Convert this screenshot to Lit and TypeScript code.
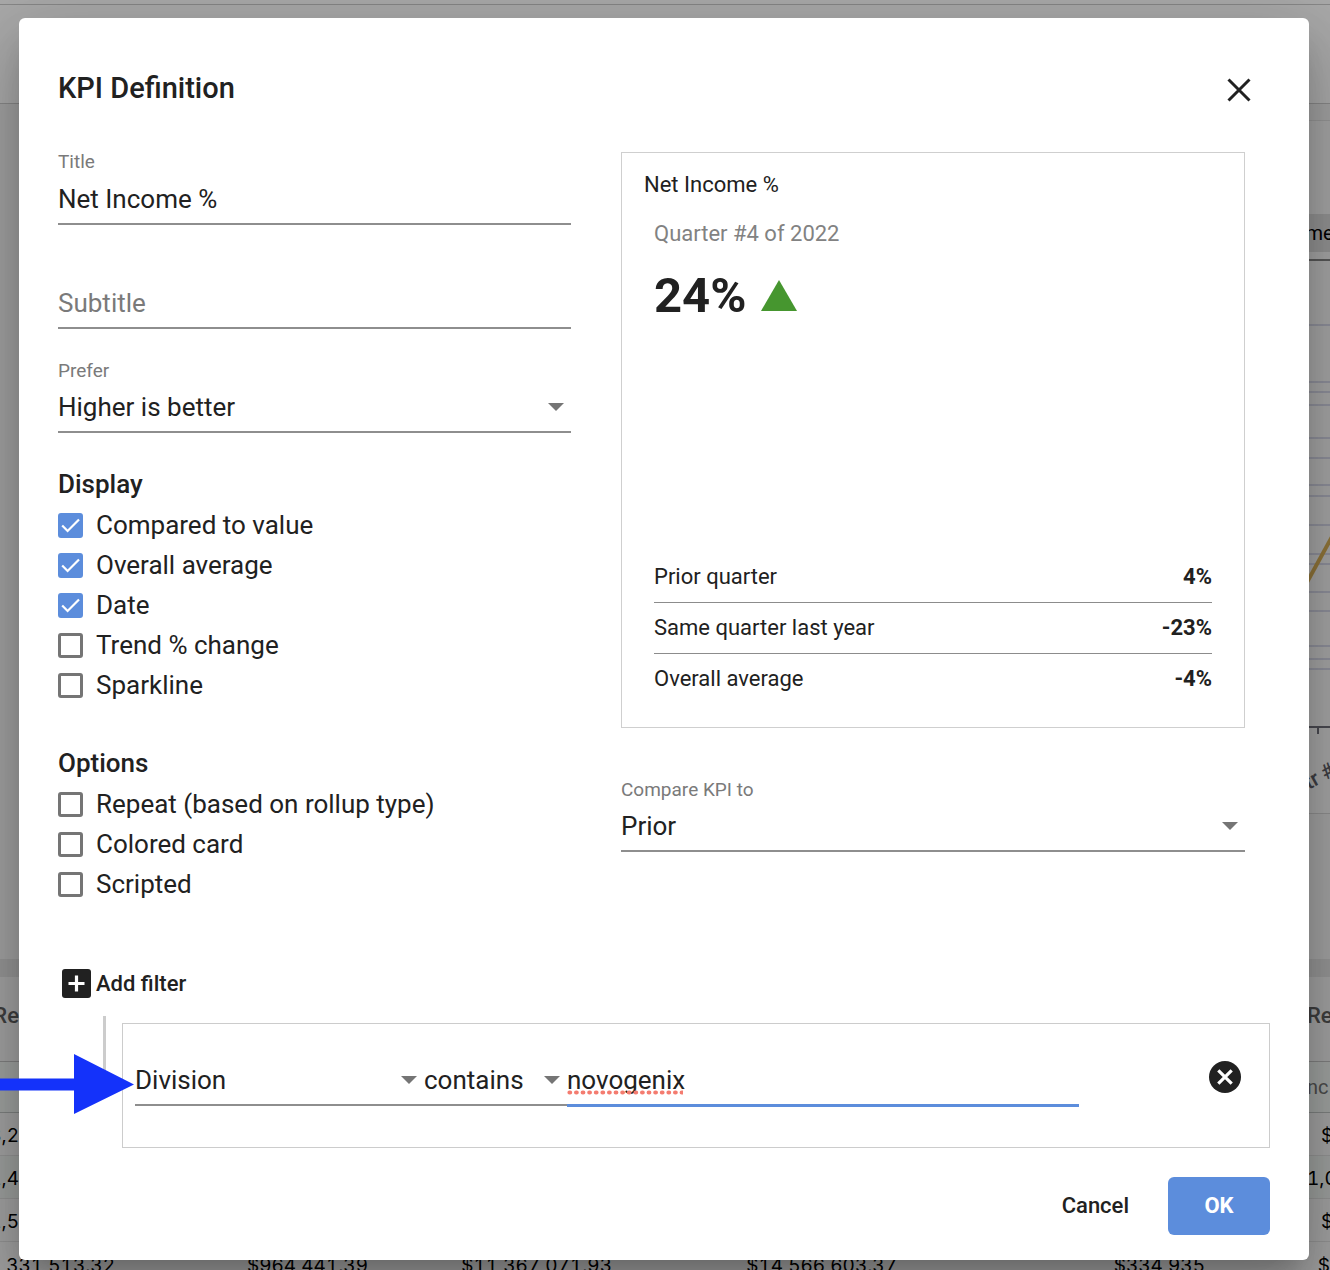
import { LitElement, html, css, svg, nothing } from "lit";
import { customElement, property, state } from "lit/decorators.js";

const chevron = html`<svg class="caret" viewBox="0 0 16 8" width="16" height="8" aria-hidden="true">
  <path d="M0 0H16L8 8Z" fill="#757575" />
</svg>`;

/* The dashboard that sits dimmed behind the dialog. */
@customElement("dashboard-page")
class DashboardPage extends LitElement {
  static styles = css`
    :host {
      display: block;
      min-height: 100vh;
      background: #eeeeee;
      font-family: Roboto, sans-serif;
      font-size: 20px;
      color: #000;
    }
    .strip {
      height: 4px;
      background: #fafafa;
      border-bottom: 1px solid #c8c8c8;
    }
    .bar {
      height: 98px;
      background: #fafafa;
      border-bottom: 1px solid #c8c8c8;
    }
    .canvas {
      display: flex;
      justify-content: flex-end;
      height: 855px;
    }
    .panel {
      width: 21px;
      padding-top: 16px;
      overflow: hidden;
    }
    .card {
      height: 692px;
      background: #f2f2f2;
      border-top: 1px solid #dcdcdc;
      border-bottom: 1px solid #d0d0d0;
    }
    .tab {
      display: flex;
      align-items: center;
      justify-content: center;
      height: 38px;
      margin-top: 93px;
      background: #d6d6d6;
      white-space: nowrap;
    }
    .chart {
      display: block;
      margin-top: 7px;
    }
    .divider {
      height: 18px;
      background: #dcdcdc;
    }
    .group,
    .sub,
    .row {
      display: flex;
      justify-content: space-between;
      box-sizing: border-box;
      overflow: hidden;
      background: #eeeeee;
    }
    .group {
      height: 85px;
      padding-bottom: 8px;
      border-bottom: 1px solid #bbb;
      font-weight: 500;
      font-size: 22px;
      color: #5c5c5c;
    }
    .sub {
      height: 51px;
      background: #e9eeeb;
      border-bottom: 1px solid #b8bdbb;
      color: #707070;
    }
    .row,
    .totals {
      font-family: Inter, sans-serif;
      font-size: 19px;
      font-variant-numeric: tabular-nums;
    }
    .row {
      height: 43px;
      padding-top: 2px;
      border-bottom: 1px solid #d8d8d8;
    }
    .row:nth-child(even) {
      background: #e6ebe8;
    }
    .edge {
      display: flex;
      align-items: center;
      width: 19px;
      overflow: hidden;
      white-space: nowrap;
    }
    .start {
      justify-content: flex-end;
    }
    .end {
      width: 23px;
    }
    .indent {
      box-sizing: border-box;
      padding-left: 14px;
    }
    .totals {
      display: grid;
      grid-template-columns: 115fr 253fr 244fr 285fr 308fr 125fr;
      align-items: center;
      height: 46px;
      overflow: hidden;
      background: #eeeeee;
      text-align: right;
    }
  `;

  render() {
    const gridLines = [325, 382, 392, 405, 438, 458, 485, 496, 525, 554, 564, 592, 611, 646, 659, 669];
    return html`
      <div class="strip"></div>
      <div class="bar"></div>
      <div class="canvas">
        <div class="panel">
          <div class="card">
            <div class="tab">me</div>
            <svg class="chart" viewBox="0 259 21 554" width="21" height="554">
              <path d="M0 260H21" stroke="#808080" stroke-width="2" />
              ${gridLines.map((y) => svg`<path d="M0 ${y}H21" stroke="#d0d2e2" stroke-width="2" />`)}
              <path d="M-3 584L24 535" stroke="#d3ac55" stroke-width="4" />
              <path d="M0 727H21M9 727V734" stroke="#6e6e78" stroke-width="2" fill="none" />
              <text transform="translate(-13 797) rotate(-29)" font-size="21" font-weight="500" fill="#5c5c64">Qtr #</text>
            </svg>
          </div>
        </div>
      </div>
      <div class="divider"></div>
      <div class="group"><span class="edge start">Re</span><span class="edge end">Re</span></div>
      <div class="sub"><span></span><span class="edge end">nc</span></div>
      <div>
        <div class="row"><span class="edge start">8,2</span><span class="edge end indent">$</span></div>
        <div class="row"><span class="edge start">1,4</span><span class="edge end">1,0</span></div>
        <div class="row"><span class="edge start">1,5</span><span class="edge end indent">$</span></div>
      </div>
      <div class="totals">
        <span>,331,513.32</span><span>$964,441.39</span><span>$11,367,071.93</span><span>$14,566,603.37</span
        ><span>$334,935</span><span>$</span>
      </div>
    `;
  }
}

/* Underlined text box with a small caption above it. */
@customElement("text-field")
class TextField extends LitElement {
  @property() label = "";
  @property() value = "";

  static styles = css`
    :host {
      display: block;
    }
    .caption {
      display: block;
      height: 24px;
      line-height: 26px;
      font-size: 19px;
      color: #7a7a7a;
    }
    .box {
      display: block;
      box-sizing: border-box;
      width: 100%;
      height: 52px;
      padding: 1px 0 0;
      border: 0;
      border-bottom: 2px solid #8e8e8e;
      outline: 0;
      background: none;
      font: inherit;
      font-size: 26px;
      color: #212121;
    }
    .box::placeholder {
      color: #7a7a7a;
      opacity: 1;
    }
  `;

  render() {
    return html`
      <label class="caption" for="box">${this.value ? this.label : nothing}</label>
      <input class="box" id="box" .value=${this.value} placeholder=${this.label} aria-label=${this.label} />
    `;
  }
}

@customElement("select-field")
class SelectField extends LitElement {
  @property() label = "";
  @property() name = "";
  @property({ attribute: false }) options: string[] = [];

  static styles = css`
    :host {
      display: block;
    }
    .caption {
      display: block;
      height: 24px;
      line-height: 28px;
      font-size: 19px;
      color: #7a7a7a;
    }
    .wrap {
      display: grid;
      align-items: center;
    }
    .wrap > * {
      grid-area: 1 / 1;
    }
    .box {
      box-sizing: border-box;
      width: 100%;
      height: 52px;
      padding: 2px 0 0;
      border: 0;
      border-bottom: 2px solid #8e8e8e;
      border-radius: 0;
      outline: 0;
      appearance: none;
      background: none;
      font: inherit;
      font-size: 26px;
      color: #212121;
    }
    .caret {
      justify-self: end;
      margin-right: 7px;
      pointer-events: none;
    }
  `;

  render() {
    return html`
      ${this.label ? html`<label class="caption" for="box">${this.label}</label>` : nothing}
      <div class="wrap">
        <select class="box" id="box" aria-label=${this.label || this.name}>
          ${this.options.map((o) => html`<option>${o}</option>`)}
        </select>
        ${chevron}
      </div>
    `;
  }
}

@customElement("check-list")
class CheckList extends LitElement {
  @property() heading = "";
  @property({ attribute: false }) items: { label: string; checked: boolean }[] = [];

  static styles = css`
    :host {
      display: block;
    }
    .heading {
      margin: 0 0 1px;
      font-size: 26px;
      line-height: 40px;
      font-weight: 500;
    }
    .item {
      display: flex;
      align-items: center;
      gap: 13px;
      height: 40px;
      font-size: 26px;
    }
    .mark {
      display: grid;
      flex: none;
      width: 25px;
      height: 25px;
    }
    .mark > * {
      grid-area: 1 / 1;
    }
    .tick {
      box-sizing: border-box;
      width: 25px;
      height: 25px;
      margin: 0;
      appearance: none;
      border: 3px solid #757575;
      border-radius: 3px;
    }
    .tick:checked {
      border-color: #5c8ddc;
      background: #5c8ddc;
    }
    .glyph {
      pointer-events: none;
      visibility: hidden;
    }
    .tick:checked + .glyph {
      visibility: visible;
    }
  `;

  render() {
    return html`
      <h3 class="heading">${this.heading}</h3>
      ${this.items.map(
        (item) => html`<label class="item">
          <span class="mark">
            <input class="tick" type="checkbox" .checked=${item.checked} />
            <svg class="glyph" viewBox="0 0 25 25" width="25" height="25" aria-hidden="true">
              <path d="M4.2 12.4L9.6 18L21 6.5" fill="none" stroke="#fff" stroke-width="2.2" />
            </svg>
          </span>
          ${item.label}
        </label>`
      )}
    `;
  }
}

@customElement("app-root")
class AppRoot extends LitElement {
  @state() private display = [
    { label: "Compared to value", checked: true },
    { label: "Overall average", checked: true },
    { label: "Date", checked: true },
    { label: "Trend % change", checked: false },
    { label: "Sparkline", checked: false },
  ];
  @state() private choices = [
    { label: "Repeat (based on rollup type)", checked: false },
    { label: "Colored card", checked: false },
    { label: "Scripted", checked: false },
  ];
  private stats = [
    ["Prior quarter", "4%"],
    ["Same quarter last year", "-23%"],
    ["Overall average", "-4%"],
  ];

  static styles = css`
    :host {
      display: grid;
      min-height: 100vh;
      overflow: hidden;
      position: relative;
      font-family: Roboto, sans-serif;
      color: #212121;
    }
    .page,
    .scrim {
      grid-area: 1 / 1;
      min-width: 0;
    }
    .page {
      height: 100vh;
      overflow: hidden;
    }
    .scrim {
      z-index: 1;
      padding: 18px 21px 10px 19px;
      background: rgba(0, 0, 0, 0.32);
    }
    .dialog {
      box-sizing: border-box;
      height: 100%;
      padding: 50px 39px 25px;
      border-radius: 6px;
      background: #fff;
      box-shadow:
        0 18px 24px -11px rgba(0, 0, 0, 0.2),
        0 38px 61px 5px rgba(0, 0, 0, 0.14),
        0 14px 74px 13px rgba(0, 0, 0, 0.12);
    }
    button {
      padding: 0;
      border: 0;
      background: none;
      font: inherit;
      color: inherit;
      cursor: pointer;
    }
    svg {
      display: block;
    }
    .head {
      display: flex;
      align-items: center;
      justify-content: space-between;
      height: 40px;
      padding-right: 19px;
    }
    .title {
      margin: 0;
      font-size: 29px;
      font-weight: 500;
    }
    .close {
      padding-top: 3px;
    }
    .columns {
      display: grid;
      grid-template-columns: 513fr 624fr;
      gap: 50px;
      margin-top: 41px;
      padding-right: 25px;
    }
    .fields {
      display: grid;
      gap: 28px;
    }
    .checks {
      display: grid;
      gap: 38px;
      margin-top: 31px;
    }
    .preview {
      box-sizing: border-box;
      display: flex;
      flex-direction: column;
      height: 576px;
      margin-top: 3px;
      margin-bottom: 48px;
      padding: 17px 32px 23px;
      border: 1px solid #cfcfcf;
      font-size: 22px;
    }
    .name {
      margin: 0 -10px;
      font-size: 22px;
      line-height: 30px;
      font-weight: 400;
    }
    .period {
      margin: 19px 0 0;
      line-height: 30px;
      color: #828282;
    }
    .figure {
      display: flex;
      align-items: center;
      gap: 15px;
      margin-top: 17px;
      font-size: 49px;
      line-height: 60px;
      font-weight: 700;
    }
    .stats {
      margin: auto 0 0;
    }
    .stat {
      display: flex;
      justify-content: space-between;
      line-height: 50px;
    }
    .stat + .stat {
      border-top: 1px solid #8c8c8c;
    }
    .stat dd {
      margin: 0;
      font-weight: 700;
    }
    .add {
      display: flex;
      align-items: center;
      gap: 5px;
      margin: 64px 0 0 4px;
      height: 30px;
      font-size: 22px;
      font-weight: 500;
    }
    .branch {
      display: flex;
      align-items: flex-start;
      margin-top: 18px;
      padding-left: 45px;
    }
    .stem {
      width: 3px;
      height: 69px;
      background: #cccccc;
    }
    .filter {
      box-sizing: border-box;
      display: flex;
      flex: 1;
      align-items: flex-start;
      height: 125px;
      margin: 7px 0 0 16px;
      padding: 30px 28px 0 12px;
      border: 1px solid #cccccc;
    }
    .subject {
      flex: 289;
    }
    .operator {
      flex: 143;
    }
    .operand {
      flex: 512;
      display: grid;
      min-width: 0;
      position: relative;
    }
    .entry {
      box-sizing: border-box;
      width: 100%;
      min-width: 0;
      height: 53px;
      padding: 2px 0 0;
      border: 0;
      border-bottom: 3px solid #5c8ddc;
      outline: 0;
      background: none;
      font: inherit;
      font-size: 26px;
      color: inherit;
    }
    .spelling {
      position: absolute;
      left: 0;
      bottom: 12px;
      pointer-events: none;
    }
    .remove {
      margin: 7px 0 0 130px;
    }
    .actions {
      display: flex;
      justify-content: flex-end;
      gap: 39px;
      margin-top: 29px;
      font-size: 22px;
      font-weight: 500;
    }
    .actions button {
      padding-bottom: 2px;
    }
    .ok {
      width: 102px;
      height: 58px;
      border-radius: 6px;
      background: #5c8ddc;
      font-weight: 700;
      color: #fff;
    }
    .pointer {
      position: absolute;
      z-index: 2;
      left: 0;
      top: 1054px;
      pointer-events: none;
    }
  `;

  render() {
    return html`
      <dashboard-page class="page" aria-hidden="true"></dashboard-page>
      <div class="scrim">
        <section class="dialog" role="dialog" aria-labelledby="heading">
          <header class="head">
            <h2 class="title" id="heading">KPI Definition</h2>
            <button class="close" aria-label="Close">
              <svg viewBox="0 0 24 24" width="24" height="24">
                <path d="M1.5 1.5L22.5 22.5M22.5 1.5L1.5 22.5" stroke="#212121" stroke-width="3" />
              </svg>
            </button>
          </header>
          <div class="columns">
            <div>
              <div class="fields">
                <text-field label="Title" value="Net Income %"></text-field>
                <text-field label="Subtitle"></text-field>
                <select-field label="Prefer" .options=${["Higher is better"]}></select-field>
              </div>
              <div class="checks">
                <check-list heading="Display" .items=${this.display}></check-list>
                <check-list heading="Options" .items=${this.choices}></check-list>
              </div>
            </div>
            <div>
              <article class="preview">
                <h3 class="name">Net Income %</h3>
                <p class="period">Quarter #4 of 2022</p>
                <div class="figure">
                  <span>24%</span>
                  <svg viewBox="0 0 36 32" width="36" height="32" aria-hidden="true">
                    <path d="M18 0L36 31H0Z" fill="#46962f" />
                  </svg>
                </div>
                <dl class="stats">
                  ${this.stats.map(([k, v]) => html`<div class="stat"><dt>${k}</dt><dd>${v}</dd></div>`)}
                </dl>
              </article>
              <select-field label="Compare KPI to" .options=${["Prior"]}></select-field>
            </div>
          </div>
          <button class="add">
            <svg viewBox="0 0 29 29" width="29" height="29" aria-hidden="true">
              <rect width="29" height="29" rx="3" fill="#212121" />
              <path d="M14.5 6.5V22.5M6.5 14.5H22.5" stroke="#fff" stroke-width="3.2" />
            </svg>
            Add filter
          </button>
          <div class="branch">
            <div class="stem"></div>
            <div class="filter">
              <select-field class="subject" name="Field" .options=${["Division"]}></select-field>
              <select-field class="operator" name="Operator" .options=${["contains"]}></select-field>
              <div class="operand">
                <input class="entry" value="novogenix" aria-label="Value" spellcheck="false" />
                <svg class="spelling" viewBox="0 0 116 5" width="116" height="5" aria-hidden="true">
                  <path d="M2.5 2.5H115" stroke="#f47c70" stroke-width="4.2" stroke-linecap="round" stroke-dasharray="0.6 6" />
                </svg>
              </div>
              <button class="remove" aria-label="Remove filter">
                <svg viewBox="0 0 32 32" width="32" height="32">
                  <circle cx="16" cy="16" r="16" fill="#212121" />
                  <path d="M9.3 9.3L22.7 22.7M22.7 9.3L9.3 22.7" stroke="#fff" stroke-width="3.2" />
                </svg>
              </button>
            </div>
          </div>
          <footer class="actions">
            <button>Cancel</button>
            <button class="ok">OK</button>
          </footer>
        </section>
      </div>
      <svg class="pointer" viewBox="0 0 134 60" width="134" height="60" aria-hidden="true">
        <path d="M0 24.5H74V0L134 30.5L74 60V36.5H0Z" fill="#1432fa" />
      </svg>
    `;
  }
}
